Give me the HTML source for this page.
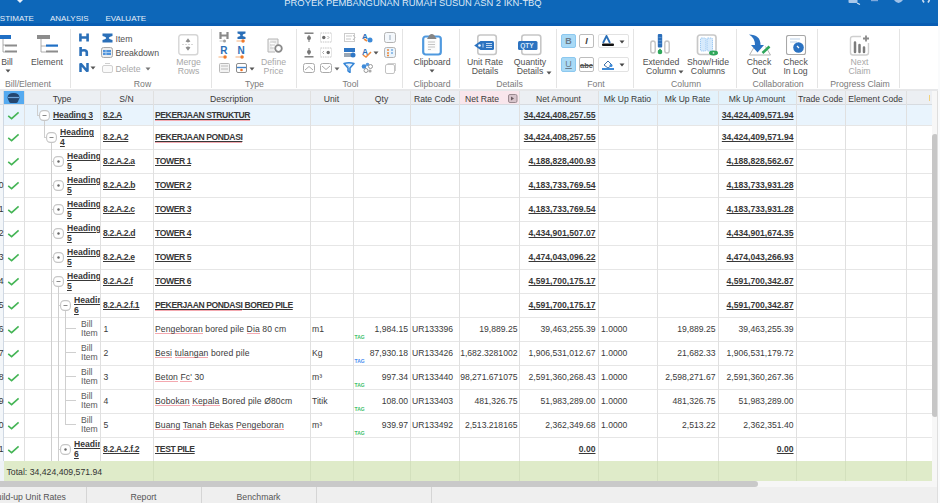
<!DOCTYPE html>
<html><head><meta charset="utf-8"><style>
*{margin:0;padding:0;box-sizing:border-box}
html,body{width:940px;height:503px;overflow:hidden;background:#fff}
body{position:relative;font-family:"Liberation Sans",sans-serif}
.a{position:absolute;display:block}
.t{position:absolute;white-space:nowrap;line-height:1}
u{text-decoration-thickness:1px;text-underline-offset:1px}
.sp{background:linear-gradient(#f4a9b0,#f4a9b0) no-repeat 0 100%/100% 1px;padding-bottom:0.3px}
</style></head><body>
<div class="a" style="left:0px;top:0px;width:940px;height:26px;background:#0d67b9;"></div>
<div class="a" style="left:0px;top:23px;width:940px;height:3px;background:#085db3;"></div>
<div class="t" style="left:263.00px;width:300px;text-align:center;top:-2.16px;font-size:9.4px;color:#dfe9f5;font-weight:normal;">PROYEK PEMBANGUNAN RUMAH SUSUN ASN 2 IKN-TBQ</div>
<svg class="a" style="left:16px;top:0px" width="8" height="4" viewBox="0 0 8 4"><path d="M1 0 L4 3 L7 0 Z" fill="#e8f0fa"/></svg>
<svg class="a" style="left:848px;top:0px" width="13" height="5" viewBox="0 0 13 5"><rect x="0.5" y="-2" width="9" height="5" rx="1" fill="#a9c8ea"/><path d="M9 3 L12 4.5" stroke="#cfe0f3" stroke-width="1.2"/></svg>
<svg class="a" style="left:871px;top:0px" width="8" height="2" viewBox="0 0 8 2"><rect x="0" y="0" width="7" height="1.2" fill="#7fa9dc"/></svg>
<svg class="a" style="left:893px;top:0px" width="11" height="4" viewBox="0 0 11 4"><path d="M1 0 Q5.5 6 10 0 Z" fill="#9fc1e8"/></svg>
<svg class="a" style="left:921px;top:0px" width="10" height="3" viewBox="0 0 10 3"><path d="M1.5 0 L3 2.5 M8.5 0 L7 2.5" stroke="#cfe0f3" stroke-width="1.6"/></svg>
<div class="t" style="left:-5.50px;top:15.23px;font-size:8.0px;color:#e6eef8;font-weight:normal;">ESTIMATE</div>
<div class="t" style="left:50.00px;top:15.23px;font-size:8.0px;color:#e6eef8;font-weight:normal;">ANALYSIS</div>
<div class="t" style="left:105.50px;top:15.23px;font-size:8.0px;color:#e6eef8;font-weight:normal;">EVALUATE</div>
<div class="a" style="left:938px;top:0px;width:2px;height:503px;background:#fafbfc;"></div>
<div class="a" style="left:0px;top:26px;width:938px;height:64px;background:#ffffff;"></div>
<div class="a" style="left:0px;top:89px;width:938px;height:2px;background:#e6e7e9;"></div>
<div class="a" style="left:70px;top:29px;width:1px;height:59px;background:#e4e4e4;"></div>
<div class="a" style="left:211px;top:29px;width:1px;height:59px;background:#e4e4e4;"></div>
<div class="a" style="left:296px;top:29px;width:1px;height:59px;background:#e4e4e4;"></div>
<div class="a" style="left:402px;top:29px;width:1px;height:59px;background:#e4e4e4;"></div>
<div class="a" style="left:459px;top:29px;width:1px;height:59px;background:#e4e4e4;"></div>
<div class="a" style="left:556px;top:29px;width:1px;height:59px;background:#e4e4e4;"></div>
<div class="a" style="left:633px;top:29px;width:1px;height:59px;background:#e4e4e4;"></div>
<div class="a" style="left:736px;top:29px;width:1px;height:59px;background:#e4e4e4;"></div>
<div class="a" style="left:817px;top:29px;width:1px;height:59px;background:#e4e4e4;"></div>
<div class="a" style="left:899px;top:29px;width:1px;height:59px;background:#e4e4e4;"></div>
<div class="t" style="left:-122.00px;width:300px;text-align:center;top:79.94px;font-size:8.7px;color:#7a7a7a;font-weight:normal;">Bill/Element</div>
<div class="t" style="left:-7.50px;width:300px;text-align:center;top:79.94px;font-size:8.7px;color:#7a7a7a;font-weight:normal;">Row</div>
<div class="t" style="left:104.50px;width:300px;text-align:center;top:79.94px;font-size:8.7px;color:#7a7a7a;font-weight:normal;">Type</div>
<div class="t" style="left:200.50px;width:300px;text-align:center;top:79.94px;font-size:8.7px;color:#7a7a7a;font-weight:normal;">Tool</div>
<div class="t" style="left:282.00px;width:300px;text-align:center;top:79.94px;font-size:8.7px;color:#7a7a7a;font-weight:normal;">Clipboard</div>
<div class="t" style="left:359.50px;width:300px;text-align:center;top:79.94px;font-size:8.7px;color:#7a7a7a;font-weight:normal;">Details</div>
<div class="t" style="left:446.00px;width:300px;text-align:center;top:79.94px;font-size:8.7px;color:#7a7a7a;font-weight:normal;">Font</div>
<div class="t" style="left:536.00px;width:300px;text-align:center;top:79.94px;font-size:8.7px;color:#7a7a7a;font-weight:normal;">Column</div>
<div class="t" style="left:628.00px;width:300px;text-align:center;top:79.94px;font-size:8.7px;color:#7a7a7a;font-weight:normal;">Collaboration</div>
<div class="t" style="left:710.00px;width:300px;text-align:center;top:79.94px;font-size:8.7px;color:#7a7a7a;font-weight:normal;">Progress Claim</div>
<svg class="a" style="left:0px;top:33px" width="22" height="22" viewBox="0 0 22 22"><rect x="0" y="2" width="11" height="4" fill="#1f6fc5"/><path d="M3 6 V19 H5 M3 12 H5" stroke="#9a9a9a" fill="none" stroke-width="0.8"/><rect x="5" y="11.5" width="12" height="2" fill="#8c8c8c"/><rect x="5" y="17.5" width="12" height="2" fill="#8c8c8c"/></svg>
<div class="t" style="left:-143.00px;width:300px;text-align:center;top:57.64px;font-size:8.7px;color:#505050;font-weight:normal;">Bill</div>
<svg class="a" style="left:5px;top:69px" width="6" height="4" viewBox="0 0 6 4"><path d="M0.5 0.5 L5.5 0.5 L3 3.5 Z" fill="#555"/></svg>
<svg class="a" style="left:36px;top:33px" width="24" height="22" viewBox="0 0 24 22"><rect x="1" y="2" width="13" height="4" fill="#8c8c8c"/><path d="M5 6 V19 H10 M5 13 H10" stroke="#9a9a9a" fill="none" stroke-width="0.8"/><rect x="10" y="11.5" width="12" height="2.2" fill="#1f6fc5"/><rect x="10" y="17.5" width="12" height="2" fill="#8c8c8c"/></svg>
<div class="t" style="left:-103.00px;width:300px;text-align:center;top:57.64px;font-size:8.7px;color:#505050;font-weight:normal;">Element</div>
<svg class="a" style="left:79px;top:33px" width="10" height="9" viewBox="0 0 10 9"><path d="M1.4 0.5 V8.5 M8.6 0.5 V8.5 M1.4 4.5 H8.6" stroke="#2a6fb8" stroke-width="2.6" fill="none"/></svg>
<svg class="a" style="left:79px;top:47px" width="10" height="9" viewBox="0 0 10 9"><path d="M1.6 0 V9 M1.6 4.5 Q1.6 3.2 5 3.2 Q7.8 3.2 7.8 5.5 V9" stroke="#2a6fb8" stroke-width="2.6" fill="none"/></svg>
<svg class="a" style="left:79px;top:63px" width="10" height="9" viewBox="0 0 10 9"><path d="M1.5 9 V0.5 L8.5 8.5 V0" stroke="#2a6fb8" stroke-width="2.5" fill="none" stroke-linejoin="bevel"/></svg>
<svg class="a" style="left:90px;top:66px" width="6" height="4" viewBox="0 0 6 4"><path d="M0.5 0.5 L5.5 0.5 L3 3.5 Z" fill="#555"/></svg>
<svg class="a" style="left:102px;top:33px" width="11" height="10" viewBox="0 0 11 10"><path d="M0.5 0.5 H10.5 V3 Q6.8 3.8 6.8 5 Q6.8 6.2 10.5 7 V9.5 H0.5 V7 Q4.2 6.2 4.2 5 Q4.2 3.8 0.5 3 Z" fill="#2a6fb8"/></svg>
<div class="t" style="left:115.50px;top:34.64px;font-size:8.7px;color:#505050;font-weight:normal;">Item</div>
<svg class="a" style="left:101px;top:47px" width="12" height="11" viewBox="0 0 12 11"><rect x="0.5" y="0.5" width="11" height="10" rx="2" fill="#ededed" stroke="#a8a8a8"/><rect x="2" y="3" width="8" height="5" fill="#4f93dc"/><path d="M5 3 V8 M2 5.5 H10" stroke="#bcd8f3" stroke-width="0.8"/></svg>
<div class="t" style="left:115.50px;top:48.64px;font-size:8.7px;color:#505050;font-weight:normal;">Breakdown</div>
<svg class="a" style="left:102px;top:63px" width="11" height="10" viewBox="0 0 11 10"><rect x="0.5" y="2.5" width="10" height="7" rx="1.5" fill="#fafafa" stroke="#d0d0d0"/><path d="M3 0.5 H8" stroke="#cfcfcf"/></svg>
<div class="t" style="left:115.50px;top:64.64px;font-size:8.7px;color:#a8a8a8;font-weight:normal;">Delete</div>
<svg class="a" style="left:145px;top:67px" width="6" height="4" viewBox="0 0 6 4"><path d="M0.5 0.5 L5.5 0.5 L3 3.5 Z" fill="#777"/></svg>
<svg class="a" style="left:178px;top:34px" width="21" height="22" viewBox="0 0 21 22"><rect x="0.8" y="0.8" width="19" height="20" rx="2.5" fill="#fff" stroke="#d6d6d6" stroke-width="1.4"/><path d="M10 4.2 L7.6 7.6 Q10 9.2 12.4 7.6 Z M10 16.8 L7.6 13.4 Q10 11.8 12.4 13.4 Z" fill="#8e8e8e"/><path d="M4 10.5 H16" stroke="#d8d8d8" stroke-width="1.2" stroke-dasharray="2 1"/></svg>
<div class="t" style="left:38.50px;width:300px;text-align:center;top:57.64px;font-size:8.7px;color:#a8a8a8;font-weight:normal;">Merge</div>
<div class="t" style="left:38.50px;width:300px;text-align:center;top:66.64px;font-size:8.7px;color:#a8a8a8;font-weight:normal;">Rows</div>
<svg class="a" style="left:219px;top:31px" width="11" height="12" viewBox="0 0 11 12"><path d="M1.5 1 V8 M8.5 1 V8 M1.5 4.5 H8.5" stroke="#8a8a8a" stroke-width="2.2" fill="none"/><path d="M0.5 10 H4" stroke="#c8c8c8" stroke-width="1"/><circle cx="5.5" cy="10" r="1.5" fill="#a0a0a0"/></svg>
<svg class="a" style="left:236px;top:31px" width="11" height="12" viewBox="0 0 11 12"><path d="M1.5 0.5 H9.5 V2.5 Q6.5 3.3 6.5 4.3 Q6.5 5.3 9.5 6.1 V8 H1.5 V6.1 Q4.5 5.3 4.5 4.3 Q4.5 3.3 1.5 2.5 Z" fill="#2a6fb8"/><path d="M0.5 10 H5" stroke="#f5b07a" stroke-width="1"/><circle cx="7" cy="10" r="1.8" fill="#f07a2a"/></svg>
<div class="t" style="left:73.80px;width:300px;text-align:center;top:46.14px;font-size:10px;color:#2a6fb8;font-weight:bold;">R</div>
<svg class="a" style="left:218px;top:55px" width="11" height="4" viewBox="0 0 11 4"><path d="M0.5 2 H5" stroke="#f5b07a" stroke-width="1"/><circle cx="7" cy="2" r="1.8" fill="#f07a2a"/></svg>
<div class="t" style="left:91.00px;width:300px;text-align:center;top:46.14px;font-size:10px;color:#2a6fb8;font-weight:bold;">N</div>
<svg class="a" style="left:235px;top:55px" width="11" height="4" viewBox="0 0 11 4"><path d="M0.5 2 H5" stroke="#f5b07a" stroke-width="1"/><circle cx="7" cy="2" r="1.8" fill="#f07a2a"/></svg>
<svg class="a" style="left:219px;top:63px" width="11" height="10" viewBox="0 0 11 10"><rect x="0.5" y="0.5" width="10" height="9" rx="1" fill="#f3f3f3" stroke="#b8b8b8"/><path d="M2 3 H9 M2 6 H9" stroke="#bbb"/></svg>
<svg class="a" style="left:236px;top:63px" width="11" height="10" viewBox="0 0 11 10"><rect x="0.5" y="0.5" width="10" height="9" rx="1.5" fill="#fff" stroke="#8c8c8c"/><path d="M1 4.5 H10" stroke="#3d82cc" stroke-width="1.4"/><circle cx="5.5" cy="7" r="1.3" fill="#f07020"/></svg>
<svg class="a" style="left:249px;top:67px" width="6" height="4" viewBox="0 0 6 4"><path d="M0.5 0.5 L5.5 0.5 L3 3.5 Z" fill="#555"/></svg>
<svg class="a" style="left:266px;top:37px" width="18" height="17" viewBox="0 0 18 17"><path d="M2 2 H12 V9 M2 2 V15 H9" fill="#efefef" stroke="#b5b5b5"/><path d="M4 5 H10 M4 8 H9 M4 11 H8" stroke="#c6c6c6"/><circle cx="12.5" cy="11.5" r="3.3" fill="none" stroke="#8a8a8a" stroke-width="1.8"/></svg>
<div class="t" style="left:123.50px;width:300px;text-align:center;top:57.64px;font-size:8.7px;color:#a8a8a8;font-weight:normal;">Define</div>
<div class="t" style="left:123.50px;width:300px;text-align:center;top:66.64px;font-size:8.7px;color:#a8a8a8;font-weight:normal;">Price</div>
<svg class="a" style="left:303px;top:32px" width="12" height="11" viewBox="0 0 12 11"><path d="M1.5 1.2 H10.5" stroke="#777" stroke-width="1.4"/><path d="M6 3 V10" stroke="#8a8a8a" stroke-width="1.2"/><circle cx="6" cy="6" r="2" fill="#777"/></svg>
<svg class="a" style="left:303px;top:47px" width="12" height="11" viewBox="0 0 12 11"><path d="M6 1 V8" stroke="#8a8a8a" stroke-width="1.2"/><circle cx="6" cy="5" r="2" fill="#777"/><path d="M1.5 9.8 H10.5" stroke="#777" stroke-width="1.4"/></svg>
<svg class="a" style="left:303px;top:63px" width="12" height="11" viewBox="0 0 12 11"><rect x="0.5" y="0.5" width="11" height="9" rx="2" fill="none" stroke="#aaa"/><path d="M2 7 L6 3.5 L10 7" stroke="#aaa" fill="none"/></svg>
<svg class="a" style="left:320px;top:32px" width="12" height="11" viewBox="0 0 12 11"><path d="M0.5 1 H11.5 M0.5 10 H11.5" stroke="#c4c4c4" stroke-dasharray="1.5 0.8"/><path d="M0.5 1 V10 M11.5 1 V10" stroke="#e6e6e6"/><circle cx="3.8" cy="5.5" r="1.7" fill="#6a6a6a"/><path d="M7.5 4 L9 5.5 L7.5 7" stroke="#aaa" fill="none"/></svg>
<svg class="a" style="left:320px;top:47px" width="12" height="11" viewBox="0 0 12 11"><path d="M0.5 1 H11.5 M0.5 10 H11.5" stroke="#c4c4c4" stroke-dasharray="1.5 0.8"/><path d="M0.5 1 V10 M11.5 1 V10" stroke="#e6e6e6"/><circle cx="8.2" cy="5.5" r="1.7" fill="#6a6a6a"/><path d="M4 4 L2.5 5.5 L4 7" stroke="#aaa" fill="none"/></svg>
<svg class="a" style="left:320px;top:63px" width="12" height="11" viewBox="0 0 12 11"><rect x="0.5" y="0.5" width="11" height="9" rx="2" fill="none" stroke="#aaa"/><path d="M2 3 L6 6.5 L10 3" stroke="#aaa" fill="none"/></svg>
<svg class="a" style="left:334px;top:67px" width="6" height="4" viewBox="0 0 6 4"><path d="M0.5 0.5 L5.5 0.5 L3 3.5 Z" fill="#666"/></svg>
<svg class="a" style="left:344px;top:32px" width="12" height="11" viewBox="0 0 12 11"><rect x="0.5" y="1.5" width="10" height="8" fill="none" stroke="#ccc"/><path d="M2 4 H8 M2 7 H7" stroke="#c6c6c6"/><path d="M9 3 L11 5.5 L9 8" stroke="#bbb" fill="none"/></svg>
<svg class="a" style="left:344px;top:47px" width="12" height="11" viewBox="0 0 12 11"><rect x="0" y="1" width="11" height="4" fill="#2f77c6"/><rect x="0" y="6" width="7" height="4" fill="#9aa7b5"/><circle cx="9" cy="8" r="2.5" fill="#2f77c6"/></svg>
<svg class="a" style="left:343px;top:62px" width="12" height="11" viewBox="0 0 12 11"><path d="M1 1.5 Q6 0 11 1.5 L7 6 V10.5 L5 9 V6 Z" fill="#e8f2fb" stroke="#3384d6" stroke-width="1.5" stroke-linejoin="round"/><path d="M4 3 L6 5" stroke="#7fb0e6" stroke-width="0.8"/></svg>
<svg class="a" style="left:361px;top:32px" width="12" height="11" viewBox="0 0 12 11"><text x="1" y="7" font-size="8" font-weight="bold" fill="#2a6fb8" font-family="Liberation Sans">A</text><path d="M3 7 L6 9" stroke="#f08a3c" stroke-width="1.6"/><circle cx="9" cy="8" r="2.5" fill="#3d8ad8"/></svg>
<svg class="a" style="left:361px;top:47px" width="12" height="11" viewBox="0 0 12 11"><text x="1" y="8" font-size="8.5" font-weight="bold" fill="#2a6fb8" font-family="Liberation Sans">A</text><path d="M2 8 L5 10 L10 5" stroke="#f08a3c" stroke-width="1.5" fill="none"/></svg>
<svg class="a" style="left:373px;top:51px" width="6" height="4" viewBox="0 0 6 4"><path d="M0.5 0.5 L5.5 0.5 L3 3.5 Z" fill="#555"/></svg>
<svg class="a" style="left:361px;top:62px" width="12" height="11" viewBox="0 0 12 11"><circle cx="3" cy="4.5" r="2.3" fill="#3d8ad8"/><circle cx="6.5" cy="2.5" r="1.8" fill="#5a9be0"/><circle cx="9.5" cy="4.5" r="2" fill="none" stroke="#999"/><circle cx="5" cy="8.5" r="2" fill="none" stroke="#999"/><circle cx="9" cy="9" r="1.6" fill="#aaa"/></svg>
<svg class="a" style="left:384px;top:32px" width="12" height="11" viewBox="0 0 12 11"><rect x="0.5" y="0.5" width="11" height="10" rx="2" fill="#f4f8fc" stroke="#b3b3b3"/><path d="M6 3 V8" stroke="#9ab"/></svg>
<svg class="a" style="left:384px;top:47px" width="12" height="11" viewBox="0 0 12 11"><rect x="0.5" y="0.5" width="11" height="10" rx="2" fill="#e9f3fb" stroke="#b3b3b3"/><path d="M3 3 H5 M3 6 H5 M3 8.5 H5" stroke="#f08a3c" stroke-width="1.3"/><path d="M7 3 H9 M7 6 H9" stroke="#3d8ad8"/></svg>
<svg class="a" style="left:384px;top:63px" width="12" height="11" viewBox="0 0 12 11"><rect x="1.5" y="1.5" width="9" height="9" rx="1.5" fill="#fff" stroke="#c2c2c2"/><path d="M3.5 0.5 H11.5 V8" stroke="#cfcfcf" fill="none"/></svg>
<svg class="a" style="left:422px;top:33px" width="20" height="23" viewBox="0 0 20 23"><rect x="1.2" y="3.5" width="17.6" height="18" rx="2.5" fill="#fff" stroke="#4f99df" stroke-width="2.2"/><path d="M5 6 L7.5 2 Q9.8 0 12.1 2 L14.6 6 Z" fill="#858585"/><rect x="5" y="6" width="9.5" height="12" fill="#fbfbfb"/><path d="M6 9 H13 M6 11.5 H13 M6 14 H13 M6 16.5 H9" stroke="#c4c4c4" stroke-width="1.1"/></svg>
<div class="t" style="left:282.00px;width:300px;text-align:center;top:57.64px;font-size:8.7px;color:#505050;font-weight:normal;">Clipboard</div>
<svg class="a" style="left:429px;top:69px" width="6" height="4" viewBox="0 0 6 4"><path d="M0.5 0.5 L5.5 0.5 L3 3.5 Z" fill="#555"/></svg>
<svg class="a" style="left:473px;top:34px" width="25" height="22" viewBox="0 0 25 22"><rect x="4.8" y="1" width="18.5" height="19.5" rx="2.5" fill="#fff" stroke="#c6c6c6" stroke-width="1.6"/><path d="M7.5 7 H19.5 Q21 7 21 8.5 V14.5 Q21 16 19.5 16 H7.5 L1.2 11.5 Z" fill="#2c73c0"/><circle cx="6.5" cy="11.5" r="1.3" fill="#fff"/><path d="M10 9.5 V13.5 M13 9.5 H19 M13 11.5 H19 M13 13.5 H19" stroke="#cfe1f5" stroke-width="0.9"/></svg>
<div class="t" style="left:335.00px;width:300px;text-align:center;top:57.64px;font-size:8.7px;color:#505050;font-weight:normal;">Unit Rate</div>
<div class="t" style="left:335.00px;width:300px;text-align:center;top:66.64px;font-size:8.7px;color:#505050;font-weight:normal;">Details</div>
<svg class="a" style="left:517px;top:34px" width="25" height="22" viewBox="0 0 25 22"><rect x="4.8" y="1" width="19" height="19.5" rx="2.5" fill="#fff" stroke="#c6c6c6" stroke-width="1.6"/><rect x="1" y="7" width="19.5" height="9" rx="1.5" fill="#2c73c0"/><text x="3.2" y="14" font-size="6.6" font-weight="bold" fill="#d9e8f8" font-family="Liberation Sans">QTY</text></svg>
<div class="t" style="left:380.00px;width:300px;text-align:center;top:57.64px;font-size:8.7px;color:#505050;font-weight:normal;">Quantity</div>
<div class="t" style="left:380.00px;width:300px;text-align:center;top:66.64px;font-size:8.7px;color:#505050;font-weight:normal;">Details</div>
<svg class="a" style="left:546px;top:71px" width="6" height="4" viewBox="0 0 6 4"><path d="M0.5 0.5 L5.5 0.5 L3 3.5 Z" fill="#555"/></svg>
<div class="a" style="left:561px;top:34px;width:15px;height:14px;background:#a9daf6;border:1px solid #8cc8ef;border-radius:2px"></div>
<div class="t" style="left:418.50px;width:300px;text-align:center;top:37.38px;font-size:9px;color:#6b7b8a;font-weight:bold;">B</div>
<div class="a" style="left:579px;top:34px;width:15px;height:14px;background:#ffffff;border:1px solid #bdbdbd;border-radius:2px"></div>
<div class="t" style="left:436.50px;width:300px;text-align:center;top:37.38px;font-size:9px;color:#444;font-weight:bold;"><i>I</i></div>
<div class="a" style="left:598px;top:34px;width:31px;height:14px;background:#ffffff;border:1px solid #e2e2e2;border-radius:2px"></div>
<svg class="a" style="left:600px;top:35px" width="16" height="12" viewBox="0 0 16 12"><path d="M3 8 L6.5 1 L10 8" stroke="#2a6fb8" stroke-width="1.8" fill="none"/><rect x="2" y="8.5" width="12" height="2.5" rx="1" fill="#111"/></svg>
<svg class="a" style="left:619px;top:40px" width="6" height="4" viewBox="0 0 6 4"><path d="M0.5 0.5 L5.5 0.5 L3 3.5 Z" fill="#444"/></svg>
<div class="a" style="left:561px;top:57px;width:15px;height:15px;background:#a9daf6;border:1px solid #8cc8ef;border-radius:2px"></div>
<div class="t" style="left:418.50px;width:300px;text-align:center;top:60.38px;font-size:9px;color:#6b7b8a;font-weight:normal;"><u>U</u></div>
<div class="a" style="left:579px;top:57px;width:15px;height:15px;background:#ffffff;border:1px solid #bdbdbd;border-radius:2px"></div>
<div class="t" style="left:436.50px;width:300px;text-align:center;top:61.65px;font-size:7.5px;color:#555;font-weight:bold;"><s>abc</s></div>
<div class="a" style="left:598px;top:57px;width:31px;height:15px;background:#ffffff;border:1px solid #e2e2e2;border-radius:2px"></div>
<svg class="a" style="left:600px;top:59px" width="16" height="12" viewBox="0 0 16 12"><path d="M4 6 L8 2 L12 6 L8 9 Z" fill="#fff" stroke="#3d6fa8" stroke-width="1"/><circle cx="11" cy="6.5" r="1.5" fill="#3d8ad8"/><rect x="2" y="9" width="12" height="2" fill="#3d8ad8"/></svg>
<svg class="a" style="left:619px;top:63px" width="6" height="4" viewBox="0 0 6 4"><path d="M0.5 0.5 L5.5 0.5 L3 3.5 Z" fill="#444"/></svg>
<svg class="a" style="left:649px;top:33px" width="22" height="22" viewBox="0 0 22 22"><rect x="1.8" y="8" width="4.4" height="12" rx="2.2" fill="none" stroke="#c4c4c4" stroke-width="1.4"/><rect x="15.8" y="8" width="4.4" height="12" rx="2.2" fill="none" stroke="#c4c4c4" stroke-width="1.4"/><rect x="8.8" y="1" width="4.4" height="13.5" rx="1" fill="#2c6fbb"/><path d="M9.5 4.5 H12.5 M9.5 7.5 H12.5 M9.5 10.5 H12.5" stroke="#6aa0d8" stroke-width="0.7"/><path d="M11 15.5 L13.2 18 H8.8 Z" fill="#2ea65a"/><circle cx="11" cy="19" r="2.3" fill="#2ea65a"/></svg>
<div class="t" style="left:511.00px;width:300px;text-align:center;top:57.64px;font-size:8.7px;color:#505050;font-weight:normal;">Extended</div>
<div class="t" style="left:511.00px;width:300px;text-align:center;top:66.64px;font-size:8.7px;color:#505050;font-weight:normal;">Column</div>
<svg class="a" style="left:678px;top:70px" width="6" height="4" viewBox="0 0 6 4"><path d="M0.5 0.5 L5.5 0.5 L3 3.5 Z" fill="#555"/></svg>
<svg class="a" style="left:696px;top:34px" width="23" height="22" viewBox="0 0 23 22"><rect x="1.5" y="1" width="18.5" height="19.5" rx="2.5" fill="#fff" stroke="#c8c8c8" stroke-width="1.7"/><rect x="4.5" y="4" width="5.5" height="13" rx="1" fill="#d6eafc" stroke="#86bdf0" stroke-width="0.8" stroke-dasharray="1.2 0.8"/><rect x="11" y="4" width="5.5" height="13" rx="1" fill="#d6eafc" stroke="#86bdf0" stroke-width="0.8" stroke-dasharray="1.2 0.8"/><ellipse cx="17.5" cy="19" rx="4.5" ry="2.4" fill="#2ea65a"/><circle cx="17.5" cy="19" r="0.9" fill="#bfe8cc"/></svg>
<div class="t" style="left:558.00px;width:300px;text-align:center;top:57.64px;font-size:8.7px;color:#505050;font-weight:normal;">Show/Hide</div>
<div class="t" style="left:558.00px;width:300px;text-align:center;top:66.64px;font-size:8.7px;color:#505050;font-weight:normal;">Columns</div>
<svg class="a" style="left:748px;top:34px" width="24" height="22" viewBox="0 0 24 22"><path d="M1.5 21 L6.5 12.5 M17.5 12.5 L22.5 21 H1.5" stroke="#b5b5b5" fill="none" stroke-width="1"/><path d="M1 0.5 Q12.5 0.5 12.5 11 H16 L9.5 18.5 L3 11 H7 Q7 4 1 0.5 Z" fill="#2a72c2"/><path d="M14.5 19 L21.5 12.5" stroke="#2ea65a" stroke-width="2.6"/></svg>
<div class="t" style="left:609.00px;width:300px;text-align:center;top:57.64px;font-size:8.7px;color:#505050;font-weight:normal;">Check</div>
<div class="t" style="left:609.00px;width:300px;text-align:center;top:66.64px;font-size:8.7px;color:#505050;font-weight:normal;">Out</div>
<svg class="a" style="left:786px;top:35px" width="21" height="21" viewBox="0 0 21 21"><rect x="0.5" y="0.5" width="19" height="19" rx="2" fill="#fff" stroke="#a8a8a8" stroke-width="1.1"/><path d="M4 4 H14 M4 7 H11" stroke="#b9cfe6"/><circle cx="12.5" cy="12.5" r="5.3" fill="#2a72c2"/><path d="M11 11 L13 13" stroke="#fff" stroke-width="1.2"/></svg>
<div class="t" style="left:645.50px;width:300px;text-align:center;top:57.64px;font-size:8.7px;color:#505050;font-weight:normal;">Check</div>
<div class="t" style="left:645.50px;width:300px;text-align:center;top:66.64px;font-size:8.7px;color:#505050;font-weight:normal;">In Log</div>
<svg class="a" style="left:848px;top:33px" width="24" height="24" viewBox="0 0 24 24"><path d="M13 3.5 H5 Q2.5 3.5 2.5 6 V19.5 Q2.5 22 5 22 H18 Q20.5 22 20.5 19.5 V10" fill="none" stroke="#cfcfcf" stroke-width="1.4"/><path d="M7 9.5 V19 M11.5 12 V19 M16 14.5 V19" stroke="#7c7c7c" stroke-width="2.5" stroke-linecap="round"/><path d="M18 2.5 V8.5 M15 5.5 H21" stroke="#8a8a8a" stroke-width="1.8"/></svg>
<div class="t" style="left:709.50px;width:300px;text-align:center;top:57.64px;font-size:8.7px;color:#a8a8a8;font-weight:normal;">Next</div>
<div class="t" style="left:709.50px;width:300px;text-align:center;top:66.64px;font-size:8.7px;color:#a8a8a8;font-weight:normal;">Claim</div>
<div class="a" style="left:0px;top:91px;width:932px;height:14px;background:#eceff3;"></div>
<div class="a" style="left:4px;top:91px;width:20px;height:14px;background:#55aaf0;"></div>
<div class="a" style="left:459px;top:91px;width:60px;height:14px;background:#f9e6ec;"></div>
<div class="a" style="left:598px;top:91px;width:59px;height:14px;background:#e3f2fb;"></div>
<div class="a" style="left:657px;top:91px;width:61px;height:14px;background:#e3f2fb;"></div>
<div class="a" style="left:718px;top:91px;width:78px;height:14px;background:#e3f2fb;"></div>
<div class="a" style="left:0px;top:104px;width:932px;height:1px;background:#d7dbe0;"></div>
<svg class="a" style="left:6px;top:92px" width="15" height="12" viewBox="0 0 15 12"><path d="M1.5 6 Q1.5 1 7.5 1 Q13.5 1 13.5 6 L12 9.5 Q11.5 11 10 11 H5 Q3.5 11 3 9.5 Z" fill="#24466f"/><path d="M2 5.5 H13" stroke="#6fa5da" stroke-width="1.2"/></svg>
<svg class="a" style="left:508px;top:94px" width="10" height="9" viewBox="0 0 10 9"><rect x="0.5" y="0.5" width="8.5" height="8" rx="1.5" fill="#d7c4cb" stroke="#9b8a90"/><path d="M3 2.5 L6 4.5 L3 6.5 Z" fill="#6a5a60"/></svg>
<div class="t" style="left:-88.00px;width:300px;text-align:center;top:95.02px;font-size:8.6px;color:#3a3a3a;font-weight:normal;">Type</div>
<div class="t" style="left:-23.50px;width:300px;text-align:center;top:95.02px;font-size:8.6px;color:#3a3a3a;font-weight:normal;">S/N</div>
<div class="t" style="left:81.50px;width:300px;text-align:center;top:95.02px;font-size:8.6px;color:#3a3a3a;font-weight:normal;">Description</div>
<div class="t" style="left:181.50px;width:300px;text-align:center;top:95.02px;font-size:8.6px;color:#3a3a3a;font-weight:normal;">Unit</div>
<div class="t" style="left:231.50px;width:300px;text-align:center;top:95.02px;font-size:8.6px;color:#3a3a3a;font-weight:normal;">Qty</div>
<div class="t" style="left:284.50px;width:300px;text-align:center;top:95.02px;font-size:8.6px;color:#3a3a3a;font-weight:normal;">Rate Code</div>
<div class="t" style="left:332.00px;width:300px;text-align:center;top:95.02px;font-size:8.6px;color:#3a3a3a;font-weight:normal;">Net Rate</div>
<div class="t" style="left:408.50px;width:300px;text-align:center;top:95.02px;font-size:8.6px;color:#3a3a3a;font-weight:normal;">Net Amount</div>
<div class="t" style="left:477.50px;width:300px;text-align:center;top:95.02px;font-size:8.6px;color:#3a3a3a;font-weight:normal;">Mk Up Ratio</div>
<div class="t" style="left:537.50px;width:300px;text-align:center;top:95.02px;font-size:8.6px;color:#3a3a3a;font-weight:normal;">Mk Up Rate</div>
<div class="t" style="left:607.00px;width:300px;text-align:center;top:95.02px;font-size:8.6px;color:#3a3a3a;font-weight:normal;">Mk Up Amount</div>
<div class="t" style="left:670.50px;width:300px;text-align:center;top:95.02px;font-size:8.6px;color:#3a3a3a;font-weight:normal;">Trade Code</div>
<div class="t" style="left:725.50px;width:300px;text-align:center;top:95.02px;font-size:8.6px;color:#3a3a3a;font-weight:normal;">Element Code</div>
<div class="a" style="left:929px;top:95px;width:1px;height:6px;background:#f3d27a;"></div>
<div class="a" style="left:4px;top:105px;width:928px;height:20px;background:#e9f4fd;"></div>
<div class="a" style="left:0px;top:105px;width:4px;height:356px;background:#f3f6f9;"></div>
<div class="a" style="left:3px;top:91px;width:1px;height:390px;background:#cfd8e3;"></div>
<div class="a" style="left:4px;top:125px;width:928px;height:1px;background:#e6e6e6;"></div>
<div class="a" style="left:4px;top:149px;width:928px;height:1px;background:#e6e6e6;"></div>
<div class="a" style="left:4px;top:173px;width:928px;height:1px;background:#e6e6e6;"></div>
<div class="a" style="left:4px;top:197px;width:928px;height:1px;background:#e6e6e6;"></div>
<div class="a" style="left:4px;top:221px;width:928px;height:1px;background:#e6e6e6;"></div>
<div class="a" style="left:4px;top:245px;width:928px;height:1px;background:#e6e6e6;"></div>
<div class="a" style="left:4px;top:269px;width:928px;height:1px;background:#e6e6e6;"></div>
<div class="a" style="left:4px;top:293px;width:928px;height:1px;background:#e6e6e6;"></div>
<div class="a" style="left:4px;top:317px;width:928px;height:1px;background:#e6e6e6;"></div>
<div class="a" style="left:4px;top:341px;width:928px;height:1px;background:#e6e6e6;"></div>
<div class="a" style="left:4px;top:365px;width:928px;height:1px;background:#e6e6e6;"></div>
<div class="a" style="left:4px;top:389px;width:928px;height:1px;background:#e6e6e6;"></div>
<div class="a" style="left:4px;top:413px;width:928px;height:1px;background:#e6e6e6;"></div>
<div class="a" style="left:4px;top:437px;width:928px;height:1px;background:#e6e6e6;"></div>
<div class="a" style="left:4px;top:461px;width:928px;height:1px;background:#e6e6e6;"></div>
<div class="a" style="left:24px;top:91px;width:1px;height:370px;background:#e0e0e0;"></div>
<div class="a" style="left:100px;top:91px;width:1px;height:370px;background:#e0e0e0;"></div>
<div class="a" style="left:153px;top:91px;width:1px;height:370px;background:#e0e0e0;"></div>
<div class="a" style="left:310px;top:91px;width:1px;height:370px;background:#e0e0e0;"></div>
<div class="a" style="left:353px;top:91px;width:1px;height:370px;background:#e0e0e0;"></div>
<div class="a" style="left:410px;top:91px;width:1px;height:370px;background:#e0e0e0;"></div>
<div class="a" style="left:459px;top:91px;width:1px;height:370px;background:#e0e0e0;"></div>
<div class="a" style="left:519px;top:91px;width:1px;height:370px;background:#e0e0e0;"></div>
<div class="a" style="left:598px;top:91px;width:1px;height:370px;background:#e0e0e0;"></div>
<div class="a" style="left:657px;top:91px;width:1px;height:370px;background:#e0e0e0;"></div>
<div class="a" style="left:718px;top:91px;width:1px;height:370px;background:#e0e0e0;"></div>
<div class="a" style="left:796px;top:91px;width:1px;height:370px;background:#e0e0e0;"></div>
<div class="a" style="left:845px;top:91px;width:1px;height:370px;background:#e0e0e0;"></div>
<div class="a" style="left:906px;top:91px;width:1px;height:370px;background:#e0e0e0;"></div>
<div class="a" style="left:932px;top:91px;width:1px;height:370px;background:#e0e0e0;"></div>
<svg class="a" style="left:7px;top:110.5px" width="13" height="9" viewBox="0 0 13 9"><path d="M1.2 4.8 L4.6 7.6 L11.6 1.4" stroke="#45b556" stroke-width="1.6" fill="none"/></svg>
<svg class="a" style="left:7px;top:132.5px" width="13" height="9" viewBox="0 0 13 9"><path d="M1.2 4.8 L4.6 7.6 L11.6 1.4" stroke="#45b556" stroke-width="1.6" fill="none"/></svg>
<svg class="a" style="left:7px;top:156.5px" width="13" height="9" viewBox="0 0 13 9"><path d="M1.2 4.8 L4.6 7.6 L11.6 1.4" stroke="#45b556" stroke-width="1.6" fill="none"/></svg>
<svg class="a" style="left:7px;top:180.5px" width="13" height="9" viewBox="0 0 13 9"><path d="M1.2 4.8 L4.6 7.6 L11.6 1.4" stroke="#45b556" stroke-width="1.6" fill="none"/></svg>
<svg class="a" style="left:7px;top:204.5px" width="13" height="9" viewBox="0 0 13 9"><path d="M1.2 4.8 L4.6 7.6 L11.6 1.4" stroke="#45b556" stroke-width="1.6" fill="none"/></svg>
<svg class="a" style="left:7px;top:228.5px" width="13" height="9" viewBox="0 0 13 9"><path d="M1.2 4.8 L4.6 7.6 L11.6 1.4" stroke="#45b556" stroke-width="1.6" fill="none"/></svg>
<svg class="a" style="left:7px;top:252.5px" width="13" height="9" viewBox="0 0 13 9"><path d="M1.2 4.8 L4.6 7.6 L11.6 1.4" stroke="#45b556" stroke-width="1.6" fill="none"/></svg>
<svg class="a" style="left:7px;top:276.5px" width="13" height="9" viewBox="0 0 13 9"><path d="M1.2 4.8 L4.6 7.6 L11.6 1.4" stroke="#45b556" stroke-width="1.6" fill="none"/></svg>
<svg class="a" style="left:7px;top:300.5px" width="13" height="9" viewBox="0 0 13 9"><path d="M1.2 4.8 L4.6 7.6 L11.6 1.4" stroke="#45b556" stroke-width="1.6" fill="none"/></svg>
<svg class="a" style="left:7px;top:324.5px" width="13" height="9" viewBox="0 0 13 9"><path d="M1.2 4.8 L4.6 7.6 L11.6 1.4" stroke="#45b556" stroke-width="1.6" fill="none"/></svg>
<svg class="a" style="left:7px;top:348.5px" width="13" height="9" viewBox="0 0 13 9"><path d="M1.2 4.8 L4.6 7.6 L11.6 1.4" stroke="#45b556" stroke-width="1.6" fill="none"/></svg>
<svg class="a" style="left:7px;top:372.5px" width="13" height="9" viewBox="0 0 13 9"><path d="M1.2 4.8 L4.6 7.6 L11.6 1.4" stroke="#45b556" stroke-width="1.6" fill="none"/></svg>
<svg class="a" style="left:7px;top:396.5px" width="13" height="9" viewBox="0 0 13 9"><path d="M1.2 4.8 L4.6 7.6 L11.6 1.4" stroke="#45b556" stroke-width="1.6" fill="none"/></svg>
<svg class="a" style="left:7px;top:420.5px" width="13" height="9" viewBox="0 0 13 9"><path d="M1.2 4.8 L4.6 7.6 L11.6 1.4" stroke="#45b556" stroke-width="1.6" fill="none"/></svg>
<svg class="a" style="left:7px;top:444.5px" width="13" height="9" viewBox="0 0 13 9"><path d="M1.2 4.8 L4.6 7.6 L11.6 1.4" stroke="#45b556" stroke-width="1.6" fill="none"/></svg>
<div class="t" style="left:-296.50px;width:300px;text-align:right;top:180.92px;font-size:8.6px;color:#333;font-weight:normal;">10</div>
<div class="t" style="left:-296.50px;width:300px;text-align:right;top:204.92px;font-size:8.6px;color:#333;font-weight:normal;">11</div>
<div class="t" style="left:-296.50px;width:300px;text-align:right;top:228.92px;font-size:8.6px;color:#333;font-weight:normal;">12</div>
<div class="t" style="left:-296.50px;width:300px;text-align:right;top:252.92px;font-size:8.6px;color:#333;font-weight:normal;">13</div>
<div class="t" style="left:-296.50px;width:300px;text-align:right;top:276.92px;font-size:8.6px;color:#333;font-weight:normal;">14</div>
<div class="t" style="left:-296.50px;width:300px;text-align:right;top:300.92px;font-size:8.6px;color:#333;font-weight:normal;">15</div>
<div class="t" style="left:-296.50px;width:300px;text-align:right;top:324.92px;font-size:8.6px;color:#333;font-weight:normal;">16</div>
<div class="t" style="left:-296.50px;width:300px;text-align:right;top:348.92px;font-size:8.6px;color:#333;font-weight:normal;">17</div>
<div class="t" style="left:-296.50px;width:300px;text-align:right;top:372.92px;font-size:8.6px;color:#333;font-weight:normal;">18</div>
<div class="t" style="left:-296.50px;width:300px;text-align:right;top:396.92px;font-size:8.6px;color:#333;font-weight:normal;">19</div>
<div class="t" style="left:-296.50px;width:300px;text-align:right;top:420.92px;font-size:8.6px;color:#333;font-weight:normal;">20</div>
<div class="t" style="left:-296.50px;width:300px;text-align:right;top:444.92px;font-size:8.6px;color:#333;font-weight:normal;">21</div>
<div class="a" style="left:37px;top:105px;width:1px;height:11px;background:#cfcfcf;"></div>
<div class="a" style="left:37px;top:115px;width:2px;height:1px;background:#cfcfcf;"></div>
<div class="a" style="left:44px;top:120px;width:1px;height:17px;background:#cfcfcf;"></div>
<div class="a" style="left:51px;top:141px;width:1px;height:320px;background:#cfcfcf;"></div>
<div class="a" style="left:58px;top:285px;width:1px;height:176px;background:#cfcfcf;"></div>
<div class="a" style="left:65px;top:309px;width:1px;height:116px;background:#cfcfcf;"></div>
<div class="a" style="left:37px;top:115px;width:2px;height:1px;background:#cfcfcf;"></div>
<svg class="a" style="left:38.5px;top:109.5px" width="11" height="11" viewBox="0 0 11 11"><rect x="0.6" y="0.6" width="9.8" height="9.8" rx="3.8" fill="#fff" stroke="#c6c6c6" stroke-width="1.1"/><path d="M3.5 5.5 H7.5" stroke="#888" stroke-width="1"/></svg>
<div class="t" style="left:53.00px;top:111.22px;font-size:8.6px;color:#383838;font-weight:bold;letter-spacing:-0.12px"><u>Heading 3</u></div>
<div class="t" style="left:103.00px;top:111.22px;font-size:8.6px;color:#383838;font-weight:bold;letter-spacing:-0.35px"><u>8.2.A</u></div>
<div class="t" style="left:155.00px;top:111.22px;font-size:8.6px;color:#383838;font-weight:bold;letter-spacing:-0.42px"><u><span class="sp">PEKERJAAN STRUKTUR</span></u></div>
<div class="t" style="left:295.50px;width:300px;text-align:right;top:111.22px;font-size:8.6px;color:#383838;font-weight:bold;"><u>34,424,408,257.55</u></div>
<div class="t" style="left:493.50px;width:300px;text-align:right;top:111.22px;font-size:8.6px;color:#383838;font-weight:bold;"><u>34,424,409,571.94</u></div>
<div class="a" style="left:44px;top:137px;width:2px;height:1px;background:#cfcfcf;"></div>
<svg class="a" style="left:45.5px;top:131.5px" width="11" height="11" viewBox="0 0 11 11"><rect x="0.6" y="0.6" width="9.8" height="9.8" rx="3.8" fill="#fff" stroke="#c6c6c6" stroke-width="1.1"/><path d="M3.5 5.5 H7.5" stroke="#888" stroke-width="1"/></svg>
<div class="t" style="left:60px;top:128.22px;width:40px;overflow:hidden;font-size:8.6px;color:#383838;font-weight:bold"><u>Heading</u></div>
<div class="t" style="left:60.00px;top:137.72px;font-size:8.6px;color:#383838;font-weight:bold;"><u>4</u></div>
<div class="t" style="left:103.00px;top:133.22px;font-size:8.6px;color:#383838;font-weight:bold;letter-spacing:-0.35px"><u>8.2.A.2</u></div>
<div class="t" style="left:155.00px;top:133.22px;font-size:8.6px;color:#383838;font-weight:bold;letter-spacing:-0.42px"><u><span class="sp">PEKERJAAN PONDASI</span></u></div>
<div class="t" style="left:295.50px;width:300px;text-align:right;top:133.22px;font-size:8.6px;color:#383838;font-weight:bold;"><u>34,424,408,257.55</u></div>
<div class="t" style="left:493.50px;width:300px;text-align:right;top:133.22px;font-size:8.6px;color:#383838;font-weight:bold;"><u>34,424,409,571.94</u></div>
<div class="a" style="left:51px;top:161px;width:2px;height:1px;background:#cfcfcf;"></div>
<svg class="a" style="left:52.5px;top:155.5px" width="11" height="11" viewBox="0 0 11 11"><rect x="0.6" y="0.6" width="9.8" height="9.8" rx="3.8" fill="#fff" stroke="#c6c6c6" stroke-width="1.1"/><circle cx="5.5" cy="5.5" r="1.2" fill="#666"/></svg>
<div class="t" style="left:67px;top:152.22px;width:33px;overflow:hidden;font-size:8.6px;color:#383838;font-weight:bold"><u>Heading</u></div>
<div class="t" style="left:67.00px;top:161.72px;font-size:8.6px;color:#383838;font-weight:bold;"><u>5</u></div>
<div class="t" style="left:103.00px;top:157.22px;font-size:8.6px;color:#383838;font-weight:bold;letter-spacing:-0.35px"><u>8.2.A.2.a</u></div>
<div class="t" style="left:155.00px;top:157.22px;font-size:8.6px;color:#383838;font-weight:bold;letter-spacing:-0.42px"><u>TOWER 1</u></div>
<div class="t" style="left:295.50px;width:300px;text-align:right;top:157.22px;font-size:8.6px;color:#383838;font-weight:bold;"><u>4,188,828,400.93</u></div>
<div class="t" style="left:493.50px;width:300px;text-align:right;top:157.22px;font-size:8.6px;color:#383838;font-weight:bold;"><u>4,188,828,562.67</u></div>
<div class="a" style="left:51px;top:185px;width:2px;height:1px;background:#cfcfcf;"></div>
<svg class="a" style="left:52.5px;top:179.5px" width="11" height="11" viewBox="0 0 11 11"><rect x="0.6" y="0.6" width="9.8" height="9.8" rx="3.8" fill="#fff" stroke="#c6c6c6" stroke-width="1.1"/><circle cx="5.5" cy="5.5" r="1.2" fill="#666"/></svg>
<div class="t" style="left:67px;top:176.22px;width:33px;overflow:hidden;font-size:8.6px;color:#383838;font-weight:bold"><u>Heading</u></div>
<div class="t" style="left:67.00px;top:185.72px;font-size:8.6px;color:#383838;font-weight:bold;"><u>5</u></div>
<div class="t" style="left:103.00px;top:181.22px;font-size:8.6px;color:#383838;font-weight:bold;letter-spacing:-0.35px"><u>8.2.A.2.b</u></div>
<div class="t" style="left:155.00px;top:181.22px;font-size:8.6px;color:#383838;font-weight:bold;letter-spacing:-0.42px"><u>TOWER 2</u></div>
<div class="t" style="left:295.50px;width:300px;text-align:right;top:181.22px;font-size:8.6px;color:#383838;font-weight:bold;"><u>4,183,733,769.54</u></div>
<div class="t" style="left:493.50px;width:300px;text-align:right;top:181.22px;font-size:8.6px;color:#383838;font-weight:bold;"><u>4,183,733,931.28</u></div>
<div class="a" style="left:51px;top:209px;width:2px;height:1px;background:#cfcfcf;"></div>
<svg class="a" style="left:52.5px;top:203.5px" width="11" height="11" viewBox="0 0 11 11"><rect x="0.6" y="0.6" width="9.8" height="9.8" rx="3.8" fill="#fff" stroke="#c6c6c6" stroke-width="1.1"/><circle cx="5.5" cy="5.5" r="1.2" fill="#666"/></svg>
<div class="t" style="left:67px;top:200.22px;width:33px;overflow:hidden;font-size:8.6px;color:#383838;font-weight:bold"><u>Heading</u></div>
<div class="t" style="left:67.00px;top:209.72px;font-size:8.6px;color:#383838;font-weight:bold;"><u>5</u></div>
<div class="t" style="left:103.00px;top:205.22px;font-size:8.6px;color:#383838;font-weight:bold;letter-spacing:-0.35px"><u>8.2.A.2.c</u></div>
<div class="t" style="left:155.00px;top:205.22px;font-size:8.6px;color:#383838;font-weight:bold;letter-spacing:-0.42px"><u>TOWER 3</u></div>
<div class="t" style="left:295.50px;width:300px;text-align:right;top:205.22px;font-size:8.6px;color:#383838;font-weight:bold;"><u>4,183,733,769.54</u></div>
<div class="t" style="left:493.50px;width:300px;text-align:right;top:205.22px;font-size:8.6px;color:#383838;font-weight:bold;"><u>4,183,733,931.28</u></div>
<div class="a" style="left:51px;top:233px;width:2px;height:1px;background:#cfcfcf;"></div>
<svg class="a" style="left:52.5px;top:227.5px" width="11" height="11" viewBox="0 0 11 11"><rect x="0.6" y="0.6" width="9.8" height="9.8" rx="3.8" fill="#fff" stroke="#c6c6c6" stroke-width="1.1"/><circle cx="5.5" cy="5.5" r="1.2" fill="#666"/></svg>
<div class="t" style="left:67px;top:224.22px;width:33px;overflow:hidden;font-size:8.6px;color:#383838;font-weight:bold"><u>Heading</u></div>
<div class="t" style="left:67.00px;top:233.72px;font-size:8.6px;color:#383838;font-weight:bold;"><u>5</u></div>
<div class="t" style="left:103.00px;top:229.22px;font-size:8.6px;color:#383838;font-weight:bold;letter-spacing:-0.35px"><u>8.2.A.2.d</u></div>
<div class="t" style="left:155.00px;top:229.22px;font-size:8.6px;color:#383838;font-weight:bold;letter-spacing:-0.42px"><u>TOWER 4</u></div>
<div class="t" style="left:295.50px;width:300px;text-align:right;top:229.22px;font-size:8.6px;color:#383838;font-weight:bold;"><u>4,434,901,507.07</u></div>
<div class="t" style="left:493.50px;width:300px;text-align:right;top:229.22px;font-size:8.6px;color:#383838;font-weight:bold;"><u>4,434,901,674.35</u></div>
<div class="a" style="left:51px;top:257px;width:2px;height:1px;background:#cfcfcf;"></div>
<svg class="a" style="left:52.5px;top:251.5px" width="11" height="11" viewBox="0 0 11 11"><rect x="0.6" y="0.6" width="9.8" height="9.8" rx="3.8" fill="#fff" stroke="#c6c6c6" stroke-width="1.1"/><circle cx="5.5" cy="5.5" r="1.2" fill="#666"/></svg>
<div class="t" style="left:67px;top:248.22px;width:33px;overflow:hidden;font-size:8.6px;color:#383838;font-weight:bold"><u>Heading</u></div>
<div class="t" style="left:67.00px;top:257.72px;font-size:8.6px;color:#383838;font-weight:bold;"><u>5</u></div>
<div class="t" style="left:103.00px;top:253.22px;font-size:8.6px;color:#383838;font-weight:bold;letter-spacing:-0.35px"><u>8.2.A.2.e</u></div>
<div class="t" style="left:155.00px;top:253.22px;font-size:8.6px;color:#383838;font-weight:bold;letter-spacing:-0.42px"><u>TOWER 5</u></div>
<div class="t" style="left:295.50px;width:300px;text-align:right;top:253.22px;font-size:8.6px;color:#383838;font-weight:bold;"><u>4,474,043,096.22</u></div>
<div class="t" style="left:493.50px;width:300px;text-align:right;top:253.22px;font-size:8.6px;color:#383838;font-weight:bold;"><u>4,474,043,266.93</u></div>
<div class="a" style="left:51px;top:281px;width:2px;height:1px;background:#cfcfcf;"></div>
<svg class="a" style="left:52.5px;top:275.5px" width="11" height="11" viewBox="0 0 11 11"><rect x="0.6" y="0.6" width="9.8" height="9.8" rx="3.8" fill="#fff" stroke="#c6c6c6" stroke-width="1.1"/><path d="M3.5 5.5 H7.5" stroke="#888" stroke-width="1"/></svg>
<div class="t" style="left:67px;top:272.22px;width:33px;overflow:hidden;font-size:8.6px;color:#383838;font-weight:bold"><u>Heading</u></div>
<div class="t" style="left:67.00px;top:281.72px;font-size:8.6px;color:#383838;font-weight:bold;"><u>5</u></div>
<div class="t" style="left:103.00px;top:277.22px;font-size:8.6px;color:#383838;font-weight:bold;letter-spacing:-0.35px"><u>8.2.A.2.f</u></div>
<div class="t" style="left:155.00px;top:277.22px;font-size:8.6px;color:#383838;font-weight:bold;letter-spacing:-0.42px"><u>TOWER 6</u></div>
<div class="t" style="left:295.50px;width:300px;text-align:right;top:277.22px;font-size:8.6px;color:#383838;font-weight:bold;"><u>4,591,700,175.17</u></div>
<div class="t" style="left:493.50px;width:300px;text-align:right;top:277.22px;font-size:8.6px;color:#383838;font-weight:bold;"><u>4,591,700,342.87</u></div>
<div class="a" style="left:58px;top:305px;width:2px;height:1px;background:#cfcfcf;"></div>
<svg class="a" style="left:59.5px;top:299.5px" width="11" height="11" viewBox="0 0 11 11"><rect x="0.6" y="0.6" width="9.8" height="9.8" rx="3.8" fill="#fff" stroke="#c6c6c6" stroke-width="1.1"/><path d="M3.5 5.5 H7.5" stroke="#888" stroke-width="1"/></svg>
<div class="t" style="left:74px;top:296.22px;width:26px;overflow:hidden;font-size:8.6px;color:#383838;font-weight:bold"><u>Heading</u></div>
<div class="t" style="left:74.00px;top:305.72px;font-size:8.6px;color:#383838;font-weight:bold;"><u>6</u></div>
<div class="t" style="left:103.00px;top:301.22px;font-size:8.6px;color:#383838;font-weight:bold;letter-spacing:-0.35px"><u>8.2.A.2.f.1</u></div>
<div class="t" style="left:155.00px;top:301.22px;font-size:8.6px;color:#383838;font-weight:bold;letter-spacing:-0.42px"><u><span class="sp">PEKERJAAN PONDASI</span> BORED PILE</u></div>
<div class="t" style="left:295.50px;width:300px;text-align:right;top:301.22px;font-size:8.6px;color:#383838;font-weight:bold;"><u>4,591,700,175.17</u></div>
<div class="t" style="left:493.50px;width:300px;text-align:right;top:301.22px;font-size:8.6px;color:#383838;font-weight:bold;"><u>4,591,700,342.87</u></div>
<div class="a" style="left:66px;top:328px;width:10px;height:1px;background:#cfcfcf;"></div>
<div class="t" style="left:81.00px;top:320.02px;font-size:8.6px;color:#5a5a5a;font-weight:normal;">Bill</div>
<div class="t" style="left:81.00px;top:328.72px;font-size:8.6px;color:#5a5a5a;font-weight:normal;">Item</div>
<div class="t" style="left:103.50px;top:324.92px;font-size:8.6px;color:#3a3a3a;font-weight:normal;">1</div>
<div class="t" style="left:155.00px;top:324.92px;font-size:8.6px;color:#3a3a3a;font-weight:normal;letter-spacing:0.1px"><span class="sp">Pengeboran</span> bored pile <span class="sp">Dia</span> 80 cm</div>
<div class="t" style="left:312.00px;top:324.92px;font-size:8.6px;color:#3a3a3a;font-weight:normal;">m1</div>
<div class="t" style="left:108.00px;width:300px;text-align:right;top:324.92px;font-size:8.6px;color:#3a3a3a;font-weight:normal;">1,984.15</div>
<div class="t" style="left:354.50px;top:334.77px;font-size:5px;color:#3fbf6a;font-weight:bold;">TAG</div>
<div class="t" style="left:412.00px;top:324.92px;font-size:8.6px;color:#3a3a3a;font-weight:normal;">UR133396</div>
<div class="t" style="left:217.50px;width:300px;text-align:right;top:324.92px;font-size:8.6px;color:#3a3a3a;font-weight:normal;">19,889.25</div>
<div class="t" style="left:295.50px;width:300px;text-align:right;top:324.92px;font-size:8.6px;color:#3a3a3a;font-weight:normal;">39,463,255.39</div>
<div class="t" style="left:601.00px;top:324.92px;font-size:8.6px;color:#3a3a3a;font-weight:normal;">1.0000</div>
<div class="t" style="left:415.50px;width:300px;text-align:right;top:324.92px;font-size:8.6px;color:#3a3a3a;font-weight:normal;">19,889.25</div>
<div class="t" style="left:493.50px;width:300px;text-align:right;top:324.92px;font-size:8.6px;color:#3a3a3a;font-weight:normal;">39,463,255.39</div>
<div class="a" style="left:66px;top:352px;width:10px;height:1px;background:#cfcfcf;"></div>
<div class="t" style="left:81.00px;top:344.02px;font-size:8.6px;color:#5a5a5a;font-weight:normal;">Bill</div>
<div class="t" style="left:81.00px;top:352.72px;font-size:8.6px;color:#5a5a5a;font-weight:normal;">Item</div>
<div class="t" style="left:103.50px;top:348.92px;font-size:8.6px;color:#3a3a3a;font-weight:normal;">2</div>
<div class="t" style="left:155.00px;top:348.92px;font-size:8.6px;color:#3a3a3a;font-weight:normal;letter-spacing:0.1px"><span class="sp">Besi</span> <span class="sp">tulangan</span> bored pile</div>
<div class="t" style="left:312.00px;top:348.92px;font-size:8.6px;color:#3a3a3a;font-weight:normal;">Kg</div>
<div class="t" style="left:108.00px;width:300px;text-align:right;top:348.92px;font-size:8.6px;color:#3a3a3a;font-weight:normal;">87,930.18</div>
<div class="t" style="left:354.50px;top:358.77px;font-size:5px;color:#4a8ef0;font-weight:bold;">TAG</div>
<div class="t" style="left:412.00px;top:348.92px;font-size:8.6px;color:#3a3a3a;font-weight:normal;">UR133426</div>
<div class="t" style="left:217.50px;width:300px;text-align:right;top:348.92px;font-size:8.6px;color:#3a3a3a;font-weight:normal;">1,682.3281002</div>
<div class="t" style="left:295.50px;width:300px;text-align:right;top:348.92px;font-size:8.6px;color:#3a3a3a;font-weight:normal;">1,906,531,012.67</div>
<div class="t" style="left:601.00px;top:348.92px;font-size:8.6px;color:#3a3a3a;font-weight:normal;">1.0000</div>
<div class="t" style="left:415.50px;width:300px;text-align:right;top:348.92px;font-size:8.6px;color:#3a3a3a;font-weight:normal;">21,682.33</div>
<div class="t" style="left:493.50px;width:300px;text-align:right;top:348.92px;font-size:8.6px;color:#3a3a3a;font-weight:normal;">1,906,531,179.72</div>
<div class="a" style="left:66px;top:376px;width:10px;height:1px;background:#cfcfcf;"></div>
<div class="t" style="left:81.00px;top:368.02px;font-size:8.6px;color:#5a5a5a;font-weight:normal;">Bill</div>
<div class="t" style="left:81.00px;top:376.72px;font-size:8.6px;color:#5a5a5a;font-weight:normal;">Item</div>
<div class="t" style="left:103.50px;top:372.92px;font-size:8.6px;color:#3a3a3a;font-weight:normal;">3</div>
<div class="t" style="left:155.00px;top:372.92px;font-size:8.6px;color:#3a3a3a;font-weight:normal;letter-spacing:0.1px"><span class="sp">Beton</span> <span class="sp">Fc'</span> 30</div>
<div class="t" style="left:312.00px;top:372.92px;font-size:8.6px;color:#3a3a3a;font-weight:normal;">m³</div>
<div class="t" style="left:108.00px;width:300px;text-align:right;top:372.92px;font-size:8.6px;color:#3a3a3a;font-weight:normal;">997.34</div>
<div class="t" style="left:354.50px;top:382.77px;font-size:5px;color:#3fbf6a;font-weight:bold;">TAG</div>
<div class="t" style="left:412.00px;top:372.92px;font-size:8.6px;color:#3a3a3a;font-weight:normal;">UR133440</div>
<div class="t" style="left:217.50px;width:300px;text-align:right;top:372.92px;font-size:8.6px;color:#3a3a3a;font-weight:normal;">98,271.671075</div>
<div class="t" style="left:295.50px;width:300px;text-align:right;top:372.92px;font-size:8.6px;color:#3a3a3a;font-weight:normal;">2,591,360,268.43</div>
<div class="t" style="left:601.00px;top:372.92px;font-size:8.6px;color:#3a3a3a;font-weight:normal;">1.0000</div>
<div class="t" style="left:415.50px;width:300px;text-align:right;top:372.92px;font-size:8.6px;color:#3a3a3a;font-weight:normal;">2,598,271.67</div>
<div class="t" style="left:493.50px;width:300px;text-align:right;top:372.92px;font-size:8.6px;color:#3a3a3a;font-weight:normal;">2,591,360,267.36</div>
<div class="a" style="left:66px;top:400px;width:10px;height:1px;background:#cfcfcf;"></div>
<div class="t" style="left:81.00px;top:392.02px;font-size:8.6px;color:#5a5a5a;font-weight:normal;">Bill</div>
<div class="t" style="left:81.00px;top:400.72px;font-size:8.6px;color:#5a5a5a;font-weight:normal;">Item</div>
<div class="t" style="left:103.50px;top:396.92px;font-size:8.6px;color:#3a3a3a;font-weight:normal;">4</div>
<div class="t" style="left:155.00px;top:396.92px;font-size:8.6px;color:#3a3a3a;font-weight:normal;letter-spacing:0.1px"><span class="sp">Bobokan</span> <span class="sp">Kepala</span> Bored pile Ø80cm</div>
<div class="t" style="left:312.00px;top:396.92px;font-size:8.6px;color:#3a3a3a;font-weight:normal;">Titik</div>
<div class="t" style="left:108.00px;width:300px;text-align:right;top:396.92px;font-size:8.6px;color:#3a3a3a;font-weight:normal;">108.00</div>
<div class="t" style="left:354.50px;top:406.77px;font-size:5px;color:#3fbf6a;font-weight:bold;">TAG</div>
<div class="t" style="left:412.00px;top:396.92px;font-size:8.6px;color:#3a3a3a;font-weight:normal;">UR133403</div>
<div class="t" style="left:217.50px;width:300px;text-align:right;top:396.92px;font-size:8.6px;color:#3a3a3a;font-weight:normal;">481,326.75</div>
<div class="t" style="left:295.50px;width:300px;text-align:right;top:396.92px;font-size:8.6px;color:#3a3a3a;font-weight:normal;">51,983,289.00</div>
<div class="t" style="left:601.00px;top:396.92px;font-size:8.6px;color:#3a3a3a;font-weight:normal;">1.0000</div>
<div class="t" style="left:415.50px;width:300px;text-align:right;top:396.92px;font-size:8.6px;color:#3a3a3a;font-weight:normal;">481,326.75</div>
<div class="t" style="left:493.50px;width:300px;text-align:right;top:396.92px;font-size:8.6px;color:#3a3a3a;font-weight:normal;">51,983,289.00</div>
<div class="a" style="left:66px;top:424px;width:10px;height:1px;background:#cfcfcf;"></div>
<div class="t" style="left:81.00px;top:416.02px;font-size:8.6px;color:#5a5a5a;font-weight:normal;">Bill</div>
<div class="t" style="left:81.00px;top:424.72px;font-size:8.6px;color:#5a5a5a;font-weight:normal;">Item</div>
<div class="t" style="left:103.50px;top:420.92px;font-size:8.6px;color:#3a3a3a;font-weight:normal;">5</div>
<div class="t" style="left:155.00px;top:420.92px;font-size:8.6px;color:#3a3a3a;font-weight:normal;letter-spacing:0.1px"><span class="sp">Buang</span> <span class="sp">Tanah</span> <span class="sp">Bekas</span> <span class="sp">Pengeboran</span></div>
<div class="t" style="left:312.00px;top:420.92px;font-size:8.6px;color:#3a3a3a;font-weight:normal;">m³</div>
<div class="t" style="left:108.00px;width:300px;text-align:right;top:420.92px;font-size:8.6px;color:#3a3a3a;font-weight:normal;">939.97</div>
<div class="t" style="left:354.50px;top:430.77px;font-size:5px;color:#3fbf6a;font-weight:bold;">TAG</div>
<div class="t" style="left:412.00px;top:420.92px;font-size:8.6px;color:#3a3a3a;font-weight:normal;">UR133492</div>
<div class="t" style="left:217.50px;width:300px;text-align:right;top:420.92px;font-size:8.6px;color:#3a3a3a;font-weight:normal;">2,513.218165</div>
<div class="t" style="left:295.50px;width:300px;text-align:right;top:420.92px;font-size:8.6px;color:#3a3a3a;font-weight:normal;">2,362,349.68</div>
<div class="t" style="left:601.00px;top:420.92px;font-size:8.6px;color:#3a3a3a;font-weight:normal;">1.0000</div>
<div class="t" style="left:415.50px;width:300px;text-align:right;top:420.92px;font-size:8.6px;color:#3a3a3a;font-weight:normal;">2,513.22</div>
<div class="t" style="left:493.50px;width:300px;text-align:right;top:420.92px;font-size:8.6px;color:#3a3a3a;font-weight:normal;">2,362,351.40</div>
<div class="a" style="left:58px;top:449px;width:2px;height:1px;background:#cfcfcf;"></div>
<svg class="a" style="left:59.5px;top:443.5px" width="11" height="11" viewBox="0 0 11 11"><rect x="0.6" y="0.6" width="9.8" height="9.8" rx="3.8" fill="#fff" stroke="#c6c6c6" stroke-width="1.1"/><circle cx="5.5" cy="5.5" r="1.2" fill="#666"/></svg>
<div class="t" style="left:74px;top:440.22px;width:26px;overflow:hidden;font-size:8.6px;color:#383838;font-weight:bold"><u>Heading</u></div>
<div class="t" style="left:74.00px;top:449.72px;font-size:8.6px;color:#383838;font-weight:bold;"><u>6</u></div>
<div class="t" style="left:103.00px;top:445.22px;font-size:8.6px;color:#383838;font-weight:bold;letter-spacing:-0.35px"><u>8.2.A.2.f.2</u></div>
<div class="t" style="left:155.00px;top:445.22px;font-size:8.6px;color:#383838;font-weight:bold;letter-spacing:-0.42px"><u>TEST PILE</u></div>
<div class="t" style="left:295.50px;width:300px;text-align:right;top:445.22px;font-size:8.6px;color:#383838;font-weight:bold;"><u>0.00</u></div>
<div class="t" style="left:493.50px;width:300px;text-align:right;top:445.22px;font-size:8.6px;color:#383838;font-weight:bold;"><u>0.00</u></div>
<div class="a" style="left:4px;top:461px;width:928px;height:20px;background:#dfebc9;"></div>
<div class="a" style="left:153px;top:461px;width:1px;height:20px;background:#d3e0bd;"></div>
<div class="a" style="left:310px;top:461px;width:1px;height:20px;background:#d3e0bd;"></div>
<div class="a" style="left:353px;top:461px;width:1px;height:20px;background:#d3e0bd;"></div>
<div class="a" style="left:410px;top:461px;width:1px;height:20px;background:#d3e0bd;"></div>
<div class="a" style="left:459px;top:461px;width:1px;height:20px;background:#d3e0bd;"></div>
<div class="a" style="left:519px;top:461px;width:1px;height:20px;background:#d3e0bd;"></div>
<div class="a" style="left:598px;top:461px;width:1px;height:20px;background:#d3e0bd;"></div>
<div class="a" style="left:657px;top:461px;width:1px;height:20px;background:#d3e0bd;"></div>
<div class="a" style="left:718px;top:461px;width:1px;height:20px;background:#d3e0bd;"></div>
<div class="a" style="left:796px;top:461px;width:1px;height:20px;background:#d3e0bd;"></div>
<div class="a" style="left:845px;top:461px;width:1px;height:20px;background:#d3e0bd;"></div>
<div class="a" style="left:906px;top:461px;width:1px;height:20px;background:#d3e0bd;"></div>
<div class="a" style="left:932px;top:461px;width:1px;height:20px;background:#d3e0bd;"></div>
<div class="a" style="left:0px;top:461px;width:4px;height:20px;background:#eef2f6;"></div>
<div class="t" style="left:6.50px;top:467.64px;font-size:8.7px;color:#333;font-weight:normal;">Total: 34,424,409,571.94</div>
<div class="a" style="left:932px;top:91px;width:6px;height:390px;background:#f7f7f7;"></div>
<div class="a" style="left:932px;top:134px;width:6px;height:283px;background:#c6c6c6;border-radius:3px"></div>
<div class="a" style="left:0px;top:481px;width:938px;height:6px;background:#f6f6f6;"></div>
<div class="a" style="left:0px;top:481px;width:758px;height:6px;background:#c9c9c9;border-radius:0 3px 3px 0"></div>
<div class="a" style="left:0px;top:487px;width:938px;height:16px;background:#efefef;"></div>
<div class="a" style="left:86px;top:487px;width:1px;height:16px;background:#d5d5d5;"></div>
<div class="a" style="left:201px;top:487px;width:1px;height:16px;background:#d5d5d5;"></div>
<div class="a" style="left:316px;top:487px;width:1px;height:16px;background:#d5d5d5;"></div>
<div class="a" style="left:431px;top:487px;width:1px;height:16px;background:#d5d5d5;"></div>
<div class="t" style="left:-121.50px;width:300px;text-align:center;top:492.64px;font-size:8.7px;color:#555;font-weight:normal;">Build-up Unit Rates</div>
<div class="t" style="left:-6.50px;width:300px;text-align:center;top:492.64px;font-size:8.7px;color:#555;font-weight:normal;">Report</div>
<div class="t" style="left:108.50px;width:300px;text-align:center;top:492.64px;font-size:8.7px;color:#555;font-weight:normal;">Benchmark</div>
<div class="a" style="left:937px;top:91px;width:1px;height:412px;background:#dedede;"></div>
</body></html>
